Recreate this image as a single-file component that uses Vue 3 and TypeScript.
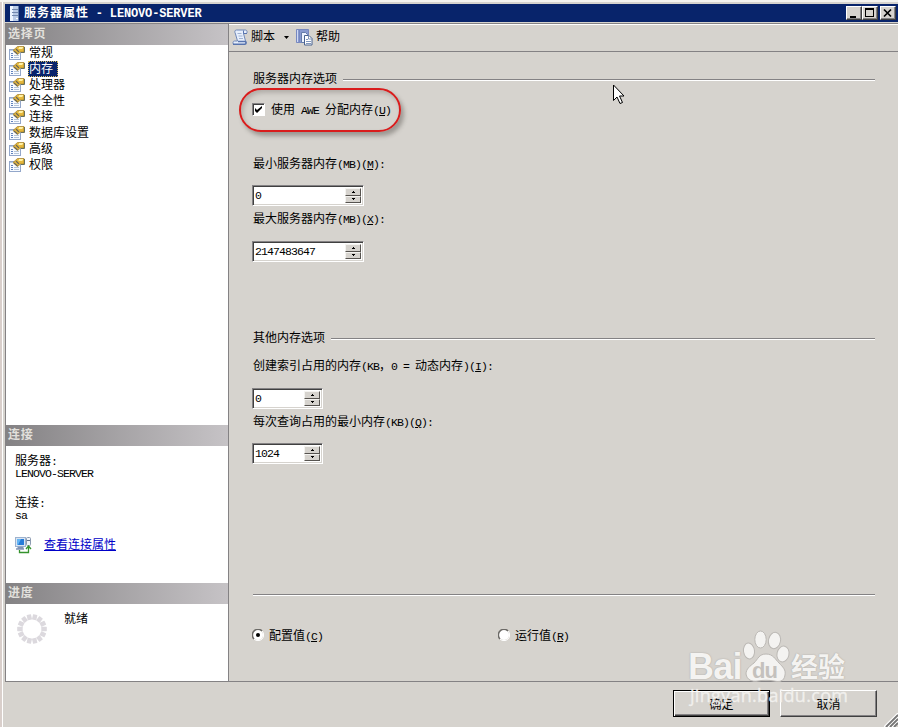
<script setup lang="ts">
import { ref } from 'vue'

const pages: string[] = ['常规', '内存', '处理器', '安全性', '连接', '数据库设置', '高级', '权限']
const selected = ref('内存')
const useAwe = ref(true)
const valueMode = ref<'config' | 'run'>('config')

interface MemoryField {
  key: string
  label: string
  unit: string
  hotkey: string
  value: string
}
const serverMemory: MemoryField[] = [
  { key: 'min', label: '最小服务器内存', unit: '(MB)', hotkey: 'M', value: '0' },
  { key: 'max', label: '最大服务器内存', unit: '(MB)', hotkey: 'X', value: '2147483647' },
]
const spokes = Array.from({ length: 14 }, (_, i) => (i + 0.5) * (360 / 14))
</script>

<template>
  <div class="window">
    <header class="titlebar">
      <svg class="server" width="12" height="17" viewBox="0 0 12 17">
        <rect x="1" y="1" width="9" height="15" fill="#b9cbe7" />
        <rect x="1" y="1" width="3" height="15" fill="#edf5ff" />
        <rect x="9" y="1" width="1" height="15" fill="#607ba9" />
        <path d="M3 4.500h6M3 7.500h6M3 10.500h6" stroke="#7288ae" />
        <rect x="7" y="13" width="2" height="1" fill="#fff" />
      </svg>
      <h1>服务器属性 <span class="l">- LENOVO-SERVER</span></h1>
      <div class="controls">
        <button class="ctl" aria-label="最小化"><svg width="14" height="12"><path d="M3 9h6v2H3z" /></svg></button>
        <button class="ctl" aria-label="最大化"><svg width="14" height="12"><path d="M2 1h9v9H2zM3 3v6h7V3z" fill-rule="evenodd" /></svg></button>
        <button class="ctl close" aria-label="关闭"><svg width="14" height="12"><path d="M3 2.500l7 7M10 2.500l-7 7" stroke="#000" stroke-width="1.700" /></svg></button>
      </div>
    </header>

    <div class="body">
      <aside class="side">
        <h2 class="bar">选择页</h2>
        <ul class="pages">
          <li v-for="p in pages" :key="p" @click="selected = p">
            <svg width="17" height="16" viewBox="0 0 17 16">
              <rect x=".5" y="4.500" width="11" height="10" fill="#f8fbff" stroke="#93a7ca" />
              <path d="M1 5.500h7" stroke="#b8cbe7" />
              <path d="M2 8.500h2M2 10.500h2M2 12.500h2" stroke="#6283bd" />
              <path d="M5 10.500h5M5 12.500h5" stroke="#b6c5d8" />
              <path d="M4 5.500L8.500 1.500h6.500v5.500h-3.500L8.500 9.500z" fill="#e5b83c" stroke="#a17c2a" stroke-width=".7" />
              <path d="M10 2.500h4M9.500 3.500h4" stroke="#fff0a4" />
              <path d="M5 6l3.500 3M7 4l3 3" stroke="#6a6557" stroke-width="1.100" />
              <path d="M12 7.500h3.500V2" fill="none" stroke="#68705c" />
            </svg>
            <span class="name" :class="{ on: p === selected }">{{ p }}</span>
          </li>
        </ul>

        <h2 class="bar">连接</h2>
        <section class="conn">
          <p>服务器<span class="l">:</span></p>
          <p class="val l">LENOVO-SERVER</p>
          <p class="second">连接<span class="l">:</span></p>
          <p class="val l">sa</p>
          <div class="view">
            <svg width="17" height="17" viewBox="0 0 17 17">
              <rect x=".5" y=".5" width="10" height="9" fill="#d9e4f2" stroke="#9db2ce" />
              <rect x="2" y="2" width="7" height="6" fill="#267bd8" />
              <path d="M2 2h4L3 8H2z" fill="#65b5f3" />
              <path d="M2.500 10.500h6M1 12h8" stroke="#8194b5" stroke-width="1.500" />
              <rect x="11.500" y=".5" width="4" height="8" rx="1" fill="#eef3f9" stroke="#8c9bb1" />
              <path d="M12 3.500h3" stroke="#60718c" />
              <path d="M4.500 13v2.500h9V10M11 12l2.500-3 2.500 3" fill="none" stroke="#35932d" stroke-width="1.300" />
            </svg>
            <a href="#">查看连接属性</a>
          </div>
        </section>

        <h2 class="bar">进度</h2>
        <section class="progress">
          <svg width="32" height="32" viewBox="-16 -16 32 32">
            <rect v-for="a in spokes" :key="a" x="-2.200" y="-14.800" width="4.400" height="5.500" rx=".4" fill="#dcd9de" :transform="`rotate(${a})`" />
          </svg>
          <span>就绪</span>
        </section>
      </aside>

      <main class="main">
        <nav class="tools">
          <svg width="17" height="17" viewBox="0 0 17 17">
            <path d="M4.500 1C2.500 1 2.500 3 3.500 5l2 7H2.500C.5 12 .5 15.500 2.500 15.500H12c2 0 2-2 1.500-3.500L11.500 4.500H14C15.500 4.500 15.500 1 13.500 1z" fill="#e7effc" stroke="#6f88b8" />
            <path d="M5.500 4.500h4M6.500 7h4M7 9.500h4" stroke="#a0b2d1" />
            <path d="M1 15.200h12c1.500 0 1.500-2.700 0-2.700H6" fill="none" stroke="#5874ae" stroke-width="1.500" />
            <path d="M11.500 1.500v3H15" fill="none" stroke="#5874ae" />
          </svg>
          <span class="tool-script">脚本</span>
          <svg class="caret" width="5" height="3"><path d="M0 0h5L2.500 3z" /></svg>
          <svg width="17" height="17" viewBox="0 0 17 17">
            <path d="M.5 .5h3v13h-3zM3.500 .5h9v13h-9z" fill="#8799ce" stroke="#7788c0" />
            <path d="M1.500 1v12" stroke="#d1daf4" />
            <path d="M5.500 3.500h4l2 2v8h-6z" fill="#eef4ff" stroke="#647baa" />
            <path d="M8.500 6.500h4.500l3 3v6.500H8.500z" fill="#fff" stroke="#49628f" />
            <path d="M12.500 6.500V10H16M10 10.500h2M10 12.500h5M10 14.500h5" fill="none" stroke="#8197bd" />
          </svg>
          <span class="tool-help">帮助</span>
        </nav>

        <div class="form">
          <div class="group"><span>服务器内存选项</span><i></i></div>
          <label class="awe">
            <button class="check" role="checkbox" :aria-checked="useAwe" @click="useAwe = !useAwe">
              <svg v-if="useAwe" width="7" height="7"><path d="M0 2v3l2 2 5-5V0L2 4z" /></svg>
            </button>
            <span>使用<span class="l"> AWE </span>分配内存<span class="l">(<u>U</u>)</span></span>
            <span class="callout"></span>
          </label>

          <div v-for="f in serverMemory" :key="f.key" class="field" :class="f.key">
            <div class="label">{{ f.label }}<span class="l">{{ f.unit }}(<u>{{ f.hotkey }}</u>):</span></div>
            <div class="spin">
              <span class="l num">{{ f.value }}</span>
              <span class="arrows"><b><svg width="3" height="2"><path d="M1 0h1v1h1v1H0V1h1z" /></svg></b><b><svg width="3" height="2"><path d="M0 0h3v1H2v1H1V1H0z" /></svg></b></span>
            </div>
          </div>

          <div class="group other"><span>其他内存选项</span><i></i></div>
          <div class="field index">
            <div class="label">创建索引占用的内存<span class="l">(KB</span><span class="comma">，</span><span class="l">0 = </span>动态内存<span class="l">)(<u>I</u>):</span></div>
            <div class="spin small">
              <span class="l num">0</span>
              <span class="arrows"><b><svg width="3" height="2"><path d="M1 0h1v1h1v1H0V1h1z" /></svg></b><b><svg width="3" height="2"><path d="M0 0h3v1H2v1H1V1H0z" /></svg></b></span>
            </div>
          </div>
          <div class="field query">
            <div class="label">每次查询占用的最小内存<span class="l">(KB)(<u>Q</u>):</span></div>
            <div class="spin small">
              <span class="l num">1024</span>
              <span class="arrows"><b><svg width="3" height="2"><path d="M1 0h1v1h1v1H0V1h1z" /></svg></b><b><svg width="3" height="2"><path d="M0 0h3v1H2v1H1V1H0z" /></svg></b></span>
            </div>
          </div>

          <div class="rule"></div>
          <div class="radios">
            <label @click="valueMode = 'config'">
              <svg width="12" height="12" viewBox="0 0 12 12">
                <circle cx="6" cy="6" r="5" fill="#fff" />
                <path d="M2 10A5.500 5.500 0 0 1 10 2" fill="none" stroke="#6b6966" stroke-width="1.500" />
                <path d="M10 2A5.500 5.500 0 0 1 2 10" fill="none" stroke="#fff" />
                <circle v-if="valueMode === 'config'" cx="6" cy="6" r="2" />
              </svg>
              <span>配置值<span class="l">(<u>C</u>)</span></span>
            </label>
            <label @click="valueMode = 'run'">
              <svg width="12" height="12" viewBox="0 0 12 12">
                <circle cx="6" cy="6" r="5" fill="#fff" />
                <path d="M2 10A5.500 5.500 0 0 1 10 2" fill="none" stroke="#6b6966" stroke-width="1.500" />
                <path d="M10 2A5.500 5.500 0 0 1 2 10" fill="none" stroke="#fff" />
                <circle v-if="valueMode === 'run'" cx="6" cy="6" r="2" />
              </svg>
              <span>运行值<span class="l">(<u>R</u>)</span></span>
            </label>
          </div>
        </div>
      </main>
    </div>

    <footer class="footer">
      <button class="btn default">确定</button>
      <button class="btn">取消</button>
    </footer>

    <svg class="grip" width="14" height="14" viewBox="0 0 14 14">
      <path d="M0 14L14 0M4 14L14 4M8 14l6-6" stroke="#fff" stroke-width="1.400" />
      <path d="M2 14L14 2M6 14l8-8M10 14l4-4" stroke="#777" stroke-width="1.800" />
    </svg>

    <svg class="cursor" width="13" height="22" viewBox="0 0 13 22">
      <path d="M1.500 1v15.500l3.500-3.500 3 6.500 2.500-1-3-6.500h4.500z" fill="#fff" stroke="#000" />
    </svg>

    <div class="mark">
      <span class="bai">Bai</span>
      <svg class="paw" width="50" height="56" viewBox="0 0 50 56">
        <g fill="#f4f3f1" stroke="#bbb8b4" stroke-width="1">
          <ellipse cx="7" cy="24" rx="5.500" ry="8" transform="rotate(-8 7 24)" />
          <ellipse cx="18.500" cy="12.500" rx="5.700" ry="8.500" />
          <ellipse cx="32.500" cy="13.500" rx="6" ry="8.200" transform="rotate(12 32.500 13.500)" />
          <ellipse cx="41" cy="27" rx="6" ry="8" transform="rotate(12 41 27)" />
          <path d="M24 27c7 0 9 5 13 9 4 4 7 7 6 12-1 7-6 7-11 6-5-1-11-1-16 0-6 1-11-1-12-7 0-5 4-8 8-11 4-4 5-9 12-9z" />
        </g>
      </svg>
      <span class="du">du</span>
      <span class="jy">经验</span>
      <span class="url">jingyan.baidu.com</span>
    </div>
  </div>
</template>

<style>
body { background: #d6d3ce; overflow: hidden; }
</style>

<style scoped>
* { box-sizing: border-box; }
h1, h2, p, ul { margin: 0; padding: 0; list-style: none; }
svg { display: block; flex: none; }
button { padding: 0; font: inherit; color: inherit; border-radius: 0; }
.window {
  position: relative; width: 898px; height: 727px; overflow: hidden;
  display: flex; flex-direction: column; padding: 4px 0 0 5px;
  background: linear-gradient(90deg, #d9cfcb 2px, #fff 2px 3px, #d6d3ce 3px);
  box-shadow: inset 0 2px #f4f3ef;
  font-family: "Noto Sans CJK SC", sans-serif; font-size: 12px; line-height: 16px; color: #000;
  white-space: nowrap;
}
.l { font-family: "Liberation Mono", monospace; font-size: 11.5px; letter-spacing: -.9px; white-space: pre; }
u { text-underline-offset: 1px; }
.titlebar { height: 18px; background: #08246b; display: flex; align-items: center; padding: 0 2px 0 4px; flex: none; }
.titlebar h1 { flex: 1; margin-left: 3px; font-size: 12px; letter-spacing: 1px; line-height: 18px; color: #fff; font-weight: 700; }
.titlebar h1 .l { font-family: "Liberation Mono", monospace; font-size: 12px; letter-spacing: -.15px; margin-left: 3px; }
.controls { display: flex; }
.ctl { width: 16px; height: 14px; border: 1px solid; border-color: #fff #404040 #404040 #fff; background: #d6d3ce; box-shadow: inset -1px -1px #848284; }
.close { margin-left: 2px; }
.body { height: 659px; display: flex; border-top: 1px solid #848284; border-left: 1px solid #848284; border-bottom: 1px solid #848284; margin-top: 1px; flex: none; }
.side { width: 223px; border-right: 1px solid #848284; background: #fff; flex: none; }
.bar { height: 21px; line-height: 18px; padding-left: 2px; font-size: 12px; letter-spacing: .8px; font-weight: 700; color: #e2e0dc; background: linear-gradient(90deg, #848284, #c6c3c6); }
.pages { height: 380px; }
.pages li { height: 16px; display: flex; align-items: center; padding-left: 3px; }
.name { margin-left: 2px; padding: 0 1px; line-height: 14px; height: 16px; }
.name.on { background: #08246b; color: #fff; outline: 1px dotted #d8bd62; outline-offset: -1px; padding-right: 5px; }
.conn { height: 137px; padding: 7px 0 0 9px; }
.conn p { height: 14px; line-height: 14px; }
.conn .val { height: 12px; line-height: 14px; }
.conn .second { margin-top: 16px; }
.view { display: flex; align-items: center; margin-top: 16px; height: 17px; }
.view a { margin: -3px 0 0 12px; color: #0000c8; text-underline-offset: 1px; }
.progress { display: flex; padding: 9px 0 0 10px; }
.progress span { margin: -3px 0 0 16px; }
.main { flex: 1; display: flex; flex-direction: column; border-top: 1px solid #fff; }
.tools { height: 27px; border-bottom: 1px solid #848284; display: flex; align-items: center; padding: 0 0 2px 3px; flex: none; }
.tools span { margin-top: -2px; }
.tools .tool-script { margin-left: 2px; }
.caret { margin: 0 7px 0 9px; }
.tools .tool-help { margin-left: 3px; }
.form { padding: 18px 23px 0 24px; }
.group { display: flex; align-items: center; height: 16px; line-height: 16px; }
.group span { margin-top: -1px; }
.group i { flex: 1; height: 2px; margin-left: 6px; margin-top: 3px; background: linear-gradient(#848284 1px, #fff 1px); }
.awe { position: relative; display: flex; align-items: center; height: 16px; margin-top: 16px; }
.check { width: 13px; height: 13px; margin: -2px 6px 0 -1px; background: #fff; border: 1px solid; border-color: #848284 #fff #fff #848284; box-shadow: inset 1px 1px #404040; padding: 2px 0 0 2px; display: flex; }
.callout { position: absolute; left: -14px; top: -14px; width: 162px; height: 44px; border: 2px solid #d91c1c; border-radius: 22px; box-shadow: 3px 4px 4px rgba(70, 65, 60, .4), inset 2px 3px 4px rgba(70, 65, 60, .25); }
.label { height: 16px; line-height: 14px; }
.field { margin-top: 5px; }
.field.min { margin-top: 38px; }
.spin { width: 112px; height: 21px; margin: 13px 0 0 -1px; display: flex; justify-content: space-between; background: #fff; border: 1px solid; border-color: #848284 #fff #fff #848284; box-shadow: inset 1px 1px #404040, inset -1px -1px #d6d3ce; padding: 2px; }
.field.max .spin { margin-top: 14px; }
.field.index .spin { margin-top: 14px; }
.spin.small { width: 71px; }
.num { line-height: 16px; }
.arrows { width: 16px; display: flex; flex-direction: column; }
.arrows b { flex: 1; display: flex; align-items: center; justify-content: center; background: #d6d3ce; border: 1px solid; border-color: #f4f3f0 #56534f #56534f #f4f3f0; }
.other { margin-top: 67px; }
.field.index { margin-top: 13px; }
.comma { display: inline-block; width: 12px; }
.rule { height: 2px; margin-top: 130px; background: linear-gradient(#848284 1px, #fff 1px); }
.radios { display: grid; grid-template-columns: 246px 1fr; margin: 31px 0 0 -1px; height: 16px; }
.radios label { display: flex; align-items: center; gap: 5px; }
.radios svg { margin-top: -2px; }
.footer { flex: 1; display: flex; justify-content: flex-end; align-items: flex-start; gap: 10px; padding: 8px 21px 0 0; }
.btn { width: 97px; height: 27px; background: #d6d3ce; border: 1px solid; border-color: #fff #404040 #404040 #fff; box-shadow: inset -1px -1px #848284; }
.btn.default { border: 1px solid #000; box-shadow: inset 1px 1px #fff, inset -1px -1px #404040, inset -2px -2px #848284; }
.grip { position: absolute; right: 0; bottom: 0; }
.cursor { position: absolute; left: 612px; top: 84px; }
.mark { position: absolute; left: 688px; top: 626px; width: 165px; height: 82px; font-family: "Liberation Sans", sans-serif; color: #f4f3f1; text-shadow: 0 0 1px #aaa7a3, 0 0 2px #bbb8b4; pointer-events: none; }
.mark > * { position: absolute; }
.bai { left: 0; top: 21px; font-size: 36px; line-height: 40px; font-weight: 700; letter-spacing: -.8px; }
.paw { left: 54px; top: 1px; }
.du { left: 64px; top: 34px; font-size: 22px; line-height: 22px; font-weight: 700; letter-spacing: -1px; color: #c4c1bd; text-shadow: none; }
.jy { left: 103px; top: 23px; font-family: "Noto Sans CJK SC", sans-serif; font-size: 27px; line-height: 34px; font-weight: 700; }
.url { left: 2px; top: 58px; font-family: "Open Sans", sans-serif; font-size: 18px; line-height: 22px; letter-spacing: .3px; opacity: .9; text-shadow: none; -webkit-text-stroke: .3px #f4f3f1; }
</style>
